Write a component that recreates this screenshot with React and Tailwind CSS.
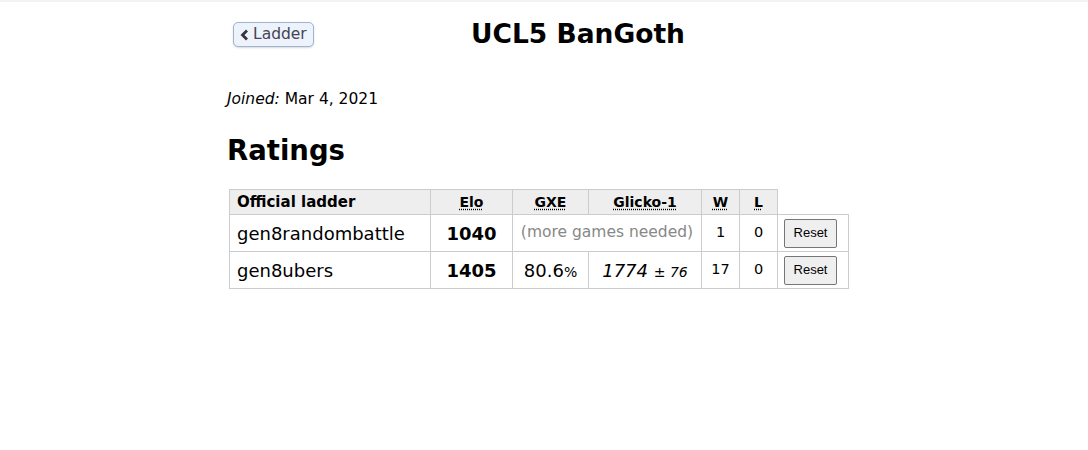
import React from 'react';

const font = { fontFamily: '"DejaVu Sans", Verdana, sans-serif' };

// header cell with dotted-underline abbreviation
const AbbrTh = ({ children, w }) => (
  <th className={`${w} border border-[#ccc] bg-[#eee] px-2 py-0 h-[25px] text-[14px] font-bold text-center`}>
    <abbr className="underline decoration-dotted underline-offset-2">{children}</abbr>
  </th>
);

const ResetButton = () => (
  <button
    className="h-[29px] w-[53px] text-[13px] text-black bg-[#efefef] border border-[#767676] rounded-[2px]"
    style={{ fontFamily: '"Liberation Sans", Arial, sans-serif' }}
  >
    Reset
  </button>
);

export default function App() {
  return (
    <div className="w-[1088px] h-[450px] bg-white text-black border-t-2 border-[#f3f3f3]" style={font}>
      <div className="ml-[227px] w-[702px]">
        {/* Header */}
        <div className="relative h-[64px]">
          <button className="absolute left-[6px] top-[20px] h-[25px] px-[6px] flex items-center gap-[4px] rounded-[5px] border border-[#9db4d3] bg-[#eef3fb] text-[#445] text-[15.5px] shadow-[0_1px_2px_rgba(0,0,0,0.15)]">
            <svg width="9" height="12" viewBox="0 0 9 12">
              <path d="M7 1.5 L2.5 6 L7 10.5" fill="none" stroke="#334" strokeWidth="2.8" />
            </svg>
            <span>Ladder</span>
          </button>
          <h1 className="pt-[16px] text-center text-[26.5px] font-bold leading-[32px]">UCL5 BanGoth</h1>
        </div>

        <p className="mt-[23px] text-[15.5px] leading-[20px]">
          <em>Joined:</em> Mar 4, 2021
        </p>

        <h2 className="mt-[24px] text-[27.5px] font-bold leading-[34px]">Ratings</h2>

        {/* Ratings table */}
        <table className="mt-[22px] ml-[2px] border-collapse">
          <thead>
            <tr>
              <th className="w-[201px] border border-[#ccc] bg-[#eee] px-[7px] h-[25px] text-[15px] font-bold text-left">Official ladder</th>
              <AbbrTh w="w-[82px]">Elo</AbbrTh>
              <AbbrTh w="w-[76px]">GXE</AbbrTh>
              <AbbrTh w="w-[113px]">Glicko-1</AbbrTh>
              <AbbrTh w="w-[38px]">W</AbbrTh>
              <AbbrTh w="w-[38px]">L</AbbrTh>
              <th className="w-[71px] border-0"></th>
            </tr>
          </thead>
          <tbody>
            <tr className="h-[37px]">
              <td className="border border-[#ccc] px-[7px] text-[18px]">gen8randombattle</td>
              <td className="border border-[#ccc] text-center text-[18px] font-bold">1040</td>
              <td colSpan={2} className="border border-[#ccc] text-center text-[15.5px] text-[#888]">(more games needed)</td>
              <td className="border border-[#ccc] text-center text-[14.5px]">1</td>
              <td className="border border-[#ccc] text-center text-[14.5px]">0</td>
              <td className="border border-[#ccc] pl-[6px] text-left"><ResetButton /></td>
            </tr>
            <tr className="h-[37px]">
              <td className="border border-[#ccc] px-[7px] text-[18px]">gen8ubers</td>
              <td className="border border-[#ccc] text-center text-[18px] font-bold">1405</td>
              <td className="border border-[#ccc] text-center text-[18px]">80.6<small className="text-[14px]">%</small></td>
              <td className="border border-[#ccc] text-center text-[18px]">
                <em>1774</em> <small className="text-[14px]">± <em>76</em></small>
              </td>
              <td className="border border-[#ccc] text-center text-[14.5px]">17</td>
              <td className="border border-[#ccc] text-center text-[14.5px]">0</td>
              <td className="border border-[#ccc] pl-[6px] text-left"><ResetButton /></td>
            </tr>
          </tbody>
        </table>
      </div>
    </div>
  );
}
